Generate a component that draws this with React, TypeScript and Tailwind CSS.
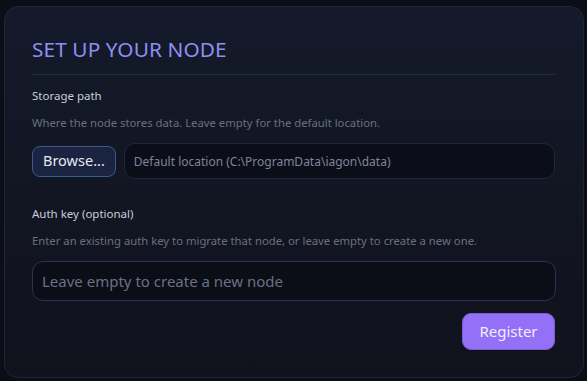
import { useState } from "react";

export default function App() {
  const [storagePath, setStoragePath] = useState("");
  const [authKey, setAuthKey] = useState("");

  return (
    <div
      className="min-h-screen w-full bg-[#0b0e17] pt-[6px] pl-[4px] pr-[3px] pb-[3px]"
      style={{ fontFamily: '"Noto Sans", "Open Sans", sans-serif' }}
    >
      {/* Card */}
      <div className="h-[372px] rounded-[14px] border border-[#1f2438] bg-gradient-to-b from-[#141a2a] to-[#10121c] px-[27px] pt-[28px]">
        <h1 className="text-[20.8px] leading-[28px] tracking-[0.1px] text-[#8e8ff2]">
          SET UP YOUR NODE
        </h1>
        <div className="mt-[11px] mr-[1px] h-px bg-[#252b47]" />

        {/* Storage path */}
        <div className="mt-[13px] text-[11.5px] leading-[16px] text-[#c9ccd6]">
          Storage path
        </div>
        <div className="mt-[11px] text-[11.3px] leading-[16px] text-[#6a6f80]">
          Where the node stores data. Leave empty for the default location.
        </div>
        <div className="mt-[12px] flex items-center gap-[8px] pr-[1px]">
          <button className="h-[31px] rounded-[8px] border border-[#3a5891] bg-[#1a2440] px-[10px] text-[14.5px] text-[#e4e8f2]">
            Browse...
          </button>
          <input
            value={storagePath}
            onChange={(e) => setStoragePath(e.target.value)}
            placeholder="Default location (C:\ProgramData\iagon\data)"
            className="h-[36px] flex-1 rounded-[11px] border border-[#1c2741] bg-[#0b0e19] px-[9px] text-[12px] text-[#c9ccd6] placeholder:text-[#7f8498] outline-none"
          />
        </div>

        {/* Auth key */}
        <div className="mt-[27px] text-[11.5px] leading-[16px] text-[#c9ccd6]">
          Auth key (optional)
        </div>
        <div className="mt-[11px] text-[11.3px] leading-[16px] text-[#6a6f80]">
          Enter an existing auth key to migrate that node, or leave empty to
          create a new one.
        </div>
        <input
          value={authKey}
          onChange={(e) => setAuthKey(e.target.value)}
          placeholder="Leave empty to create a new node"
          className="mt-[12px] block h-[40px] w-[524px] rounded-[11px] border border-[#2f3155] bg-[#0b0d17] px-[9px] text-[15px] text-[#c9ccd6] placeholder:text-[#6c7083] outline-none"
        />
        <div className="mt-[12px] flex justify-end pr-[1px]">
          <button className="h-[37px] w-[93px] rounded-[9px] border border-[#7a5fd0] bg-[#9470f6] text-[15px] text-[#f1ecff]">
            Register
          </button>
        </div>
      </div>
    </div>
  );
}
